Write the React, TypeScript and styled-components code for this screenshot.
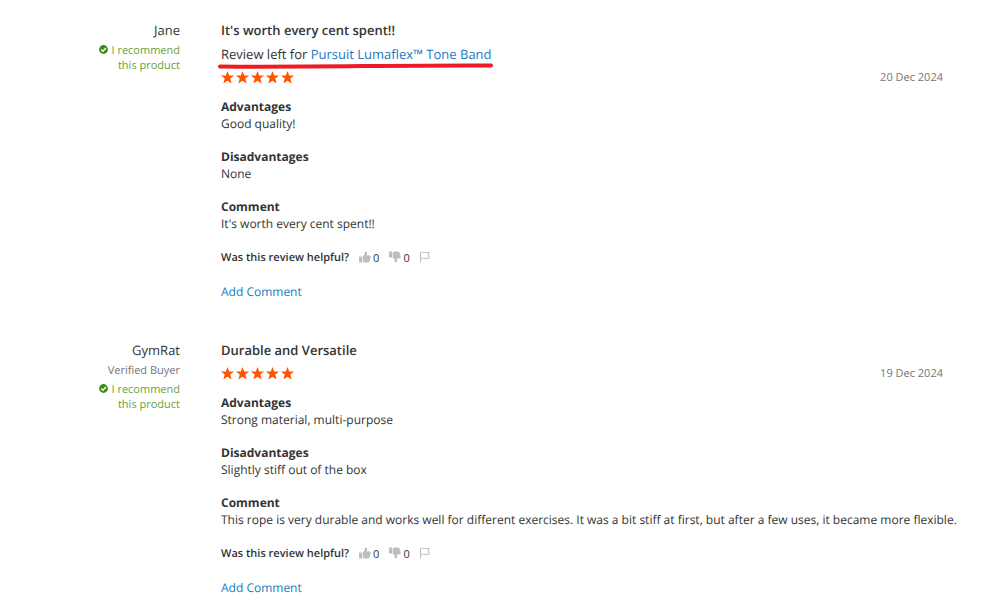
import React from "react";
import styled, { createGlobalStyle } from "styled-components";

const Global = createGlobalStyle`
  *, *::before, *::after { box-sizing: border-box; }
  body {
    margin: 0;
    background: #fff;
    color: #333;
    font: 400 12px/17px "Open Sans", "Noto Sans", sans-serif;
    text-rendering: geometricPrecision;
  }
`;

const Page = styled.main`
  padding: 20px 40px 12px 20px;
`;

const Review = styled.article`
  display: grid;
  grid-template-columns: 160px minmax(0, 1fr);
  column-gap: 41px;
  & + & { margin-top: 40px; }
`;

const Author = styled.aside`
  display: flex;
  flex-direction: column;
  align-items: flex-end;
  text-align: right;
`;

const Name = styled.span`
  font-size: 13px;
  line-height: 20px;
`;

const Verified = styled.span`
  margin-top: 3px;
  font-size: 11px;
  line-height: 16px;
  color: #757575;
`;

const Recommend = styled.span`
  width: 90px;
  margin-top: 3px;
  font-size: 11px;
  line-height: 15px;
  color: #6a9f3c;
  svg { margin-right: 3px; }
`;

const Body = styled.div`
  display: flex;
  flex-direction: column;
  align-items: stretch;
`;

const Title = styled.h2`
  margin: 0;
  font-size: 13px;
  line-height: 20px;
  font-weight: 600;
`;

const Link = styled.a`
  color: #1979c3;
  text-decoration: none;
`;

const Origin = styled.p`
  position: relative;
  align-self: flex-start;
  margin: 4px 0 0;
  font-size: 13px;
  line-height: 20px;
`;

const Underline = styled.svg`
  position: absolute;
  left: -3px;
  top: 18px;
`;

const Meta = styled.div`
  display: flex;
  align-items: center;
  justify-content: space-between;
  height: 20px;
  margin: 3px 17px 11px 0;
`;

const Stars = styled.div`
  display: flex;
  gap: 2px;
`;

const Posted = styled.time`
  font-size: 11px;
  color: #757575;
`;

const Section = styled.section`
  margin-bottom: 16px;
`;

const Heading = styled.h3`
  margin: 0;
  font-size: 12px;
  line-height: 17px;
  font-weight: 700;
`;

const Text = styled.p`
  margin: 0;
  line-height: 17px;
`;

const Helpful = styled.div`
  display: flex;
  align-items: center;
  height: 18px;
  font-size: 11px;
`;

const Question = styled.span`
  margin-right: 10px;
  font-weight: 600;
`;

const Vote = styled.button`
  display: flex;
  align-items: center;
  gap: 2px;
  margin: 0 10px 0 0;
  padding: 0;
  border: 0;
  background: none;
  color: inherit;
  font: inherit;
`;

const AddComment = styled(Link)`
  align-self: flex-start;
  margin-top: 17px;
  line-height: 17px;
`;

const Check = () => (
  <svg width="9" height="9" viewBox="0 0 9 9" aria-hidden="true">
    <circle cx="4.5" cy="4.5" r="4.4" fill="#3f8a10" />
    <path d="M2.2 4.5 4 6.2 6.9 3.1" fill="none" stroke="#fff" strokeWidth="1.4" />
  </svg>
);

const Star = () => (
  <svg width="13" height="13" viewBox="0 0 12 12" aria-hidden="true">
    <path d="M6 0 7.6 4.1H12L8.6 7 9.8 11.6 6 9 2.2 11.6 3.4 7 0 4.1H4.4Z" fill="#ff5501" />
  </svg>
);

const Thumb = ({ down = false }: { down?: boolean }) => (
  <svg width="12" height="12" viewBox="0 0 12 12" aria-hidden="true">
    <path
      transform={down ? "matrix(1 0 0 -1 0 12)" : undefined}
      d="M0 5.5H3V11.5H0ZM3.7 5.6C5.4 4.2 5.9 2.8 6 .9 6.9 0 8.3.8 8.2 2.4 8.1 3.4 7.8 4 7.5 4.6H10.8C12 4.8 12 6.5 11.3 6.9 11.8 7.6 11.5 8.4 10.9 8.7 11.2 9.4 10.9 10 10.3 10.3 10.4 11 10 11.5 9.2 11.5H5.8C4.9 11.5 4.4 11 3.7 10.8Z"
      fill="#bdbdbd"
    />
  </svg>
);

const Flag = () => (
  <svg width="10" height="12" viewBox="0 0 10 12" aria-hidden="true">
    <path d="M.5 11.5V1.5C3.5 .2 5.5 2.7 9.3 1.2L8.1 4.2 9.3 7C6 8.3 3.5 6.2 .5 7.6" fill="none" stroke="#bdbdbd" />
  </svg>
);

type ReviewData = {
  name: string;
  verified?: boolean;
  title: string;
  product?: string;
  date: string;
  iso: string;
  sections: [string, string][];
};

const reviews: ReviewData[] = [
  {
    name: "Jane",
    title: "It's worth every cent spent!!",
    product: "Pursuit Lumaflex™ Tone Band",
    date: "20 Dec 2024",
    iso: "2024-12-20",
    sections: [
      ["Advantages", "Good quality!"],
      ["Disadvantages", "None"],
      ["Comment", "It's worth every cent spent!!"],
    ],
  },
  {
    name: "GymRat",
    verified: true,
    title: "Durable and Versatile",
    date: "19 Dec 2024",
    iso: "2024-12-19",
    sections: [
      ["Advantages", "Strong material, multi-purpose"],
      ["Disadvantages", "Slightly stiff out of the box"],
      [
        "Comment",
        "This rope is very durable and works well for different exercises. It was a bit stiff at first, but after a few uses, it became more flexible.",
      ],
    ],
  },
];

export default function App() {
  return (
    <>
      <Global />
      <Page>
        {reviews.map((r) => (
          <Review key={r.name}>
            <Author>
              <Name>{r.name}</Name>
              {r.verified && <Verified>Verified Buyer</Verified>}
              <Recommend>
                <Check />I recommend this product
              </Recommend>
            </Author>
            <Body>
              <Title>{r.title}</Title>
              {r.product && (
                <Origin>
                  Review left for <Link href="#product">{r.product}</Link>
                  <Underline width="276" height="8" viewBox="0 0 276 8" aria-hidden="true">
                    <path d="M2 4.5C90 5.5 180 3 273 3.5" fill="none" stroke="#ec1c24" strokeWidth="4" strokeLinecap="round" />
                  </Underline>
                </Origin>
              )}
              <Meta>
                <Stars role="img" aria-label="5 out of 5 stars">
                  {[1, 2, 3, 4, 5].map((n) => <Star key={n} />)}
                </Stars>
                <Posted dateTime={r.iso}>{r.date}</Posted>
              </Meta>
              {r.sections.map(([heading, text]) => (
                <Section key={heading}>
                  <Heading>{heading}</Heading>
                  <Text>{text}</Text>
                </Section>
              ))}
              <Helpful>
                <Question>Was this review helpful?</Question>
                <Vote type="button" aria-label="Helpful, 0 votes"><Thumb />0</Vote>
                <Vote type="button" aria-label="Not helpful, 0 votes"><Thumb down />0</Vote>
                <Vote type="button" aria-label="Report review"><Flag /></Vote>
              </Helpful>
              <AddComment href="#comment">Add Comment</AddComment>
            </Body>
          </Review>
        ))}
      </Page>
    </>
  );
}
